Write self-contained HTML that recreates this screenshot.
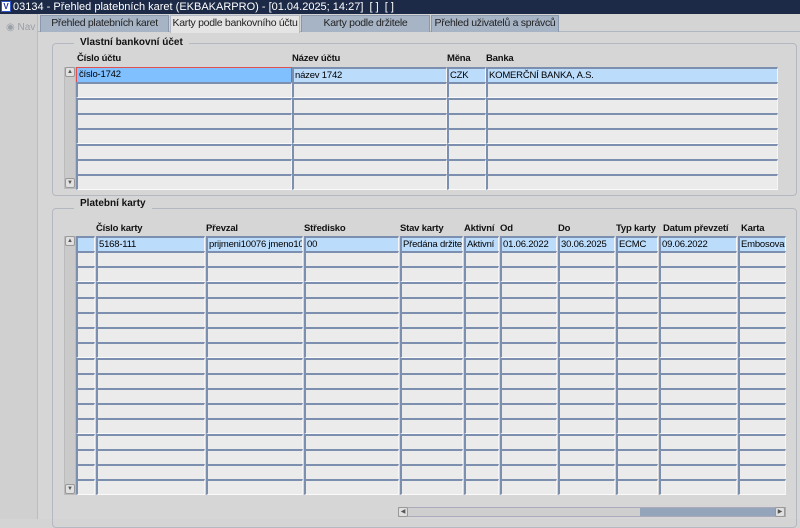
<!DOCTYPE html>
<html><head><meta charset="utf-8"><style>
*{margin:0;padding:0;box-sizing:border-box}
body{width:800px;height:519px;overflow:hidden;background:#d4d4d4;font-family:"Liberation Sans",Arial,sans-serif;font-size:11px;position:relative}
.a{position:absolute}
#title{left:0;top:0;width:800px;height:14px;background:#1c2a47;color:#fff;font-size:11px;line-height:14px;padding-left:13px;white-space:nowrap}
#logo{left:1px;top:1px;width:10px;height:11px;background:#fff;border:1px solid #3355cc;color:#2233aa;font-size:8px;line-height:9px;font-weight:bold;text-align:center}
#nav{left:0;top:14px;width:38px;height:505px;background:#d0d0d0;border-right:1px solid #b8bcc4}
.tab{top:15px;height:17px;background:#a6b4c6;border:1px solid #8a98ae;border-bottom:none;line-height:15px;text-align:center;color:#222;font-size:10.5px;white-space:nowrap;overflow:hidden;letter-spacing:-0.3px}
.tab.on{background:#e4e4e4;border-color:#b0b8c4;height:18px}
#main{left:38px;top:31px;width:762px;height:488px;background:#d6d6d6;border-top:1px solid #b0b8c4}
.grp{border:1px solid #b4b8c0;border-radius:4px}
.lbl{background:#d6d6d6;padding:0 6px;font-weight:bold;color:#111;font-size:10px;white-space:nowrap}
.h{font-weight:bold;color:#111;font-size:9.5px;white-space:nowrap;letter-spacing:-0.2px}
.c{height:15px;background:#ebebeb;border-left:2px solid #7d8fae;border-top:2px solid #7d8fae;border-bottom:1px solid #fafafa;border-right:1px solid #f5f5f5;font-size:9.5px;line-height:13px;padding-left:1px;white-space:nowrap;overflow:hidden;color:#000;letter-spacing:-0.2px}
.s{background:#bcdcfc}
.vs{background:#cacaca;border:1px solid #bbb}
.btn{width:10px;height:10px;border:1px solid #999;background:#e0e0e0;border-radius:2px;font-size:6px;line-height:8px;text-align:center;color:#555}
</style></head><body>
<div id="title" class="a">03134 - Přehled platebních karet (EKBAKARPRO) - [01.04.2025; 14:27]&nbsp; [ ]&nbsp; [ ]</div>
<div id="logo" class="a">V</div>
<div id="nav" class="a"><div class="a" style="left:6px;top:8px;color:#9aa0a8;font-size:10px">◉ Nav</div></div>
<div id="main" class="a"></div>
<div class="a tab" style="left:40px;width:129px">Přehled platebních karet</div>
<div class="a tab on" style="left:170px;width:130px">Karty podle bankovního účtu</div>
<div class="a tab" style="left:301px;width:129px">Karty podle držitele</div>
<div class="a tab" style="left:431px;width:128px">Přehled uživatelů a správců</div>

<div class="a grp" style="left:52px;top:43px;width:745px;height:153px"></div>
<div class="a lbl" style="left:74px;top:37px">Vlastní bankovní účet</div>
<div class="a h" style="left:77px;top:53px">Číslo účtu</div>
<div class="a h" style="left:292px;top:53px">Název účtu</div>
<div class="a h" style="left:447px;top:53px">Měna</div>
<div class="a h" style="left:486px;top:53px">Banka</div>
<div class="a vs" style="left:64px;top:67px;width:12px;height:122px"></div>
<div class="a btn" style="left:65px;top:67px">▲</div>
<div class="a btn" style="left:65px;top:178px">▼</div>

<div class="a grp" style="left:52px;top:208px;width:745px;height:320px"></div>
<div class="a lbl" style="left:74px;top:198px">Platební karty</div>
<div class="a h" style="left:96px;top:223px">Číslo karty</div>
<div class="a h" style="left:206px;top:223px">Převzal</div>
<div class="a h" style="left:304px;top:223px">Středisko</div>
<div class="a h" style="left:400px;top:223px">Stav karty</div>
<div class="a h" style="left:464px;top:223px">Aktivní</div>
<div class="a h" style="left:500px;top:223px">Od</div>
<div class="a h" style="left:558px;top:223px">Do</div>
<div class="a h" style="left:616px;top:223px">Typ karty</div>
<div class="a h" style="left:663px;top:223px">Datum převzetí</div>
<div class="a h" style="left:741px;top:223px">Karta</div>
<div class="a vs" style="left:64px;top:236px;width:12px;height:259px"></div>
<div class="a btn" style="left:65px;top:236px">▲</div>
<div class="a btn" style="left:65px;top:484px">▼</div>

<div class="a" style="left:398px;top:507px;width:388px;height:10px;background:#94a4bb;border:1px solid #aab"></div>
<div class="a" style="left:408px;top:508px;width:232px;height:8px;background:#cfcfcf"></div>
<div class="a btn" style="left:398px;top:507px;height:10px">◀</div>
<div class="a btn" style="left:775px;top:507px;height:10px">▶</div>

<div id="g"></div>
<script>
var g=document.getElementById('g'),h='';
var top1=[[76,216],[292,155],[447,39],[486,292]];
var d1=['číslo-1742','název 1742','CZK','KOMERČNÍ BANKA, A.S.'];
for(var r=0;r<8;r++){var y=67+Math.round(r*15.3);
 top1.forEach(function(c,i){var cls='c';var st='';var t='';
  if(r==0){cls+=' s';t=d1[i];if(i==0){st='background:#80c0ff;border:1px solid #e05050;padding-left:2px;';}}
  h+='<div class="a '+cls+'" style="left:'+c[0]+'px;top:'+y+'px;width:'+c[1]+'px;height:16px;'+st+'">'+t+'</div>';});}
var cols=[[76,19],[96,109],[206,97],[304,95],[400,63],[464,35],[500,57],[558,57],[616,42],[659,78],[738,48]];
var d2=['','5168-111','prijmeni10076 jmeno10076','00','Předána držiteli','Aktivní','01.06.2022','30.06.2025','ECMC','09.06.2022','Embosovaná'];
for(var r=0;r<17;r++){var y=236+Math.round(r*15.2);
 cols.forEach(function(c,i){var cls='c'+(r==0?' s':'');
  h+='<div class="a '+cls+'" style="left:'+c[0]+'px;top:'+y+'px;width:'+c[1]+'px;height:16px">'+(r==0?d2[i]:'')+'</div>';});}
g.innerHTML=h;
</script>
</body></html>
